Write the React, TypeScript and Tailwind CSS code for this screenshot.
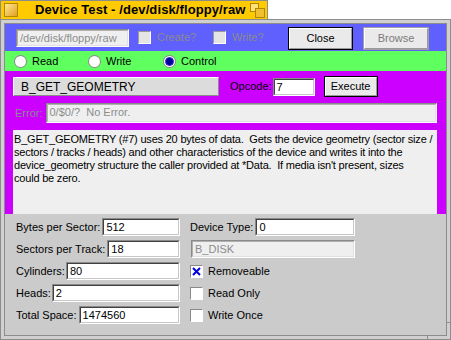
import React from "react";

function TextField({ value, className = "", disabled = false }: { value: string; className?: string; disabled?: boolean }) {
  return (
    <div
      className={`h-[18px] border border-t-[#8a8a8a] border-l-[#8a8a8a] border-b-white border-r-white ${className}`}
    >
      <div
        className={`h-full border pl-[2px] leading-[14px] whitespace-pre overflow-hidden ${
          disabled
            ? "bg-[#efefef] text-[#8c8c8c] border-t-[#b0b0b0] border-l-[#b0b0b0] border-b-[#e0e0e0] border-r-[#e0e0e0]"
            : "bg-white text-black border-t-[#404040] border-l-[#404040] border-b-[#c8c8c8] border-r-[#c8c8c8]"
        }`}
      >
        {value}
      </div>
    </div>
  );
}

function Check({ checked = false, disabled = false }: { checked?: boolean; disabled?: boolean }) {
  return (
    <div
      className={`w-[13px] h-[13px] shrink-0 border flex items-center justify-center ${
        disabled
          ? "border-t-[#9a9a9a] border-l-[#9a9a9a] border-b-white border-r-white bg-[#e4e4e4]"
          : "border-t-[#8a8a8a] border-l-[#8a8a8a] border-b-white border-r-white bg-white"
      }`}
    >
      {checked && (
        <svg width="9" height="9" viewBox="0 0 9 9">
          <path d="M1 1 L8 8 M8 1 L1 8" stroke="#0000e0" strokeWidth="2" />
        </svg>
      )}
    </div>
  );
}

function Radio({ label, on = false }: { label: string; on?: boolean }) {
  return (
    <div className="flex items-center gap-[5px]">
      <div className="w-[13px] h-[13px] rounded-full bg-[#8a8a8a] p-[1px]">
        <div className="w-full h-full rounded-full bg-white flex items-center justify-center">
          {on && <div className="w-[9px] h-[9px] rounded-full bg-[#00009a] border border-[#3030d0]" />}
        </div>
      </div>
      <span>{label}</span>
    </div>
  );
}

function Button({ label, disabled = false, className = "" }: { label: string; disabled?: boolean; className?: string }) {
  return (
    <div
      className={`shrink-0 border ${disabled ? "border-[#a0a0a0] text-[#7a7a7a]" : "border-black text-black"} bg-[#e0e0e0] ${className}`}
    >
      <div className="h-full border border-t-white border-l-white border-b-[#9a9a9a] border-r-[#9a9a9a] bg-[#eaeaea] flex items-center justify-center">
        {label}
      </div>
    </div>
  );
}

export default function App() {
  return (
    <div className="w-[451px] h-[340px] bg-white relative overflow-hidden font-['Liberation_Sans',Arial,sans-serif] text-[11px]">
      {/* Tab */}
      <div className="w-[268px] h-[19px] bg-[#ffcb00] border border-b-0 border-[#8c8c8c] flex items-center">
        <div className="ml-[3px] w-[14px] h-[14px] shrink-0 border border-[#b08800] bg-gradient-to-br from-[#ffe890] to-[#e0a000]" />
        <span className="ml-[17px] font-bold text-[13px] tracking-[0.1px] text-black whitespace-nowrap">Device Test - /dev/disk/floppy/raw</span>
        <div className="ml-auto mr-[2px] w-[15px] h-[15px] shrink-0 relative">
          <div className="absolute left-0 top-0 w-[9px] h-[9px] border border-[#b08800] bg-[#ffe27a]" />
          <div className="absolute right-0 bottom-0 w-[10px] h-[10px] border border-[#b08800] bg-[#f0c030]" />
        </div>
      </div>

      {/* Window frame */}
      <div className="h-[321px] border border-[#8c8c8c] bg-[#d0d0d0] p-[3px] relative">
        <div className="h-full border border-[#8c8c8c] flex flex-col">
          {/* Blue bar */}
          <div className="h-[27px] bg-[#6060ff] flex items-center pl-[11px]">
            <TextField value="/dev/disk/floppy/raw" disabled className="w-[113px] shrink-0" />
            <div className="ml-[9px] w-[75px] shrink-0 flex items-center gap-[6px]">
              <Check disabled />
              <span className="text-[#8a8a8a]">Create?</span>
            </div>
            <div className="w-[75px] shrink-0 flex items-center gap-[6px]">
              <Check disabled />
              <span className="text-[#8a8a8a]">Write?</span>
            </div>
            <Button label="Close" className="w-[65px] h-[23px] mt-[2px]" />
            <Button label="Browse" disabled className="ml-[10px] w-[66px] h-[23px] mt-[2px]" />
          </div>

          {/* Green bar */}
          <div className="h-[20px] bg-[#60ff60] flex items-center pl-[9px]">
            <div className="w-[74px]"><Radio label="Read" /></div>
            <div className="w-[75px]"><Radio label="Write" /></div>
            <Radio label="Control" on />
          </div>

          {/* Purple area */}
          <div className="h-[143px] bg-[#cc00ff] pl-[8px] pr-[9px] pt-[5px] flex flex-col">
            <div className="flex items-center h-[21px]">
              <div className="w-[206px] h-[19px] border border-t-white border-l-white border-b-[#8a8a8a] border-r-[#8a8a8a] bg-[#dcdcdc] pl-[7px] flex items-center text-[12px]">
                B_GET_GEOMETRY
              </div>
              <span className="ml-[11px]">Opcode:</span>
              <TextField value="7" className="ml-[1px] w-[42px]" />
              <Button label="Execute" className="ml-[9px] w-[54px] h-[21px]" />
            </div>
            <div className="flex items-center mt-[6px]">
              <span className="ml-[2px] text-[#8a8a8a]">Error:</span>
              <TextField value="0/$0/?  No Error." disabled className="ml-[3px] flex-1 h-[20px]" />
            </div>
            <div className="mt-[7px] flex-1 bg-[#efefef] pl-[1px] pt-[3px] leading-[13px] tracking-[-0.2px] text-black whitespace-pre-wrap">
              B_GET_GEOMETRY (#7) uses 20 bytes of data.  Gets the device geometry (sector size / sectors / tracks / heads) and other characteristics of the device and writes it into the device_geometry structure the caller provided at *Data.  If media isn't present, sizes
              <br />
              could be zero.
            </div>
          </div>

          {/* Gray area */}
          <div className="flex-1 bg-[#cbcbcb] flex pl-[11px] pt-[4px]">
            <div className="w-[164px] flex flex-col gap-[4px]">
              <div className="flex items-center"><span className="mr-[2px]">Bytes per Sector:</span><TextField value="512" className="flex-1" /></div>
              <div className="flex items-center"><span className="mr-[2px]">Sectors per Track:</span><TextField value="18" className="flex-1" /></div>
              <div className="flex items-center"><span className="mr-[1px]">Cylinders:</span><TextField value="80" className="flex-1" /></div>
              <div className="flex items-center"><span className="mr-[1px]">Heads:</span><TextField value="2" className="flex-1" /></div>
              <div className="flex items-center"><span className="mr-[2px]">Total Space:</span><TextField value="1474560" className="flex-1" /></div>
            </div>
            <div className="ml-[10px] w-[165px] flex flex-col gap-[4px]">
              <div className="flex items-center"><span className="mr-[2px]">Device Type:</span><TextField value="0" className="flex-1" /></div>
              <TextField value="B_DISK" disabled className="ml-[1px]" />
              <div className="h-[18px] flex items-center gap-[5px]"><Check checked /><span>Removeable</span></div>
              <div className="h-[18px] flex items-center gap-[5px]"><Check /><span>Read Only</span></div>
              <div className="h-[18px] flex items-center gap-[5px]"><Check /><span>Write Once</span></div>
            </div>
          </div>
        </div>
        {/* resize marks */}
        <div className="absolute right-[-1px] bottom-[16px] w-[5px] h-[1px] bg-[#8c8c8c]" />
        <div className="absolute right-[22px] bottom-[-1px] w-[1px] h-[5px] bg-[#8c8c8c]" />
      </div>
    </div>
  );
}
